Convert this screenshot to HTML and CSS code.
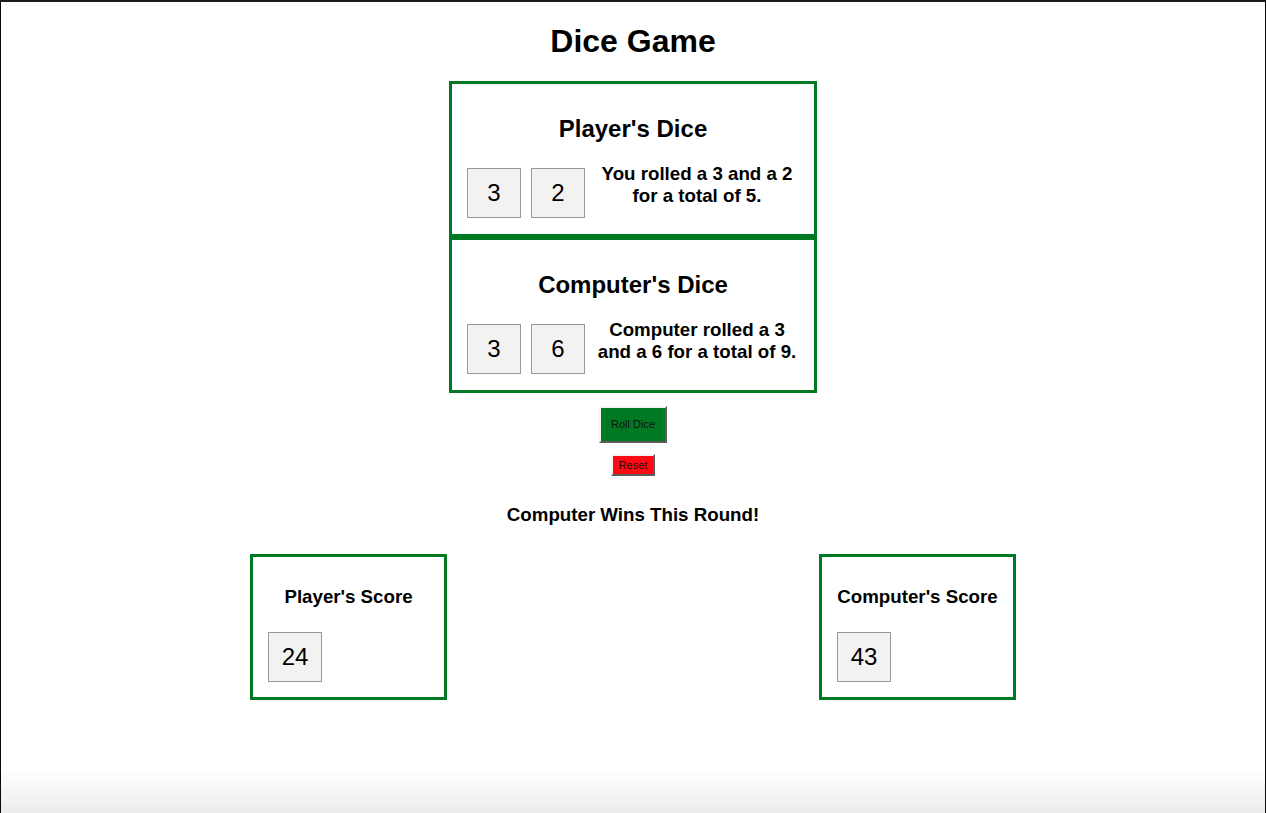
FILE: index.html
```html
<!DOCTYPE html>
<html lang="en">
<head>
<meta charset="utf-8">
<title>Dice Game</title>
<link rel="stylesheet" href="styles.css">
</head>
<body>
<div class="window">
  <h1 class="title">Dice Game</h1>

  <div class="dice-panels">
    <section class="dice-box">
      <h2 class="dice-heading">Player's Dice</h2>
      <div class="dice-row">
        <div class="die">3</div>
        <div class="die">2</div>
        <p class="roll-text">You rolled a 3 and a 2 for a total of 5.</p>
      </div>
    </section>
    <section class="dice-box">
      <h2 class="dice-heading">Computer's Dice</h2>
      <div class="dice-row">
        <div class="die">3</div>
        <div class="die">6</div>
        <p class="roll-text">Computer rolled a 3 and a 6 for a total of 9.</p>
      </div>
    </section>
  </div>

  <div class="controls">
    <button class="btn btn-roll" type="button">Roll Dice</button>
    <button class="btn btn-reset" type="button">Reset</button>
  </div>

  <p class="result">Computer Wins This Round!</p>

  <div class="scores">
    <section class="score-box">
      <h3 class="score-heading">Player's Score</h3>
      <div class="die">24</div>
    </section>
    <section class="score-box">
      <h3 class="score-heading">Computer's Score</h3>
      <div class="die">43</div>
    </section>
  </div>
</div>
</body>
</html>
```

FILE: styles.css
```css
html, body {
  margin: 0;
  padding: 0;
}

body {
  font-family: "Liberation Sans", Arial, sans-serif;
  color: #000;
  background: #fff;
}

.window {
  box-sizing: border-box;
  height: 813px;
  border-top: 2px solid #1c1c1c;
  border-left: 1px solid #0a0a0a;
  border-right: 1px solid #0a0a0a;
  background: linear-gradient(to bottom, #ffffff calc(100% - 44px), #ececec 100%);
  display: flex;
  flex-direction: column;
  align-items: center;
  overflow: hidden;
}

.title {
  font-size: 32px;
  font-weight: bold;
  margin: 21px 0 21px;
  line-height: normal;
}

.dice-panels {
  display: flex;
  flex-direction: column;
  width: 368px;
}

.dice-box {
  box-sizing: border-box;
  height: 156px;
  border: 3px solid #007a22;
  padding: 31px 15px 0;
}

.dice-heading {
  margin: 0 0 15px;
  font-size: 24px;
  font-weight: bold;
  text-align: center;
  line-height: normal;
}

.dice-row {
  display: flex;
  align-items: flex-start;
  gap: 10px;
}

.dice-row .die {
  margin-top: 10px;
}

.die {
  box-sizing: border-box;
  width: 54px;
  height: 50px;
  flex: none;
  border: 1px solid #999;
  background: #f2f2f2;
  display: flex;
  align-items: center;
  justify-content: center;
  font-size: 24px;
}

.roll-text {
  flex: 1;
  margin: 5px 0 0;
  font-size: 18.72px;
  font-weight: bold;
  text-align: center;
  line-height: normal;
}

.controls {
  margin-top: 13px;
  display: flex;
  flex-direction: column;
  align-items: center;
  gap: 11px;
}

.btn {
  font-family: "Liberation Sans", Arial, sans-serif;
  font-size: 11px;
  color: #111;
  border-style: solid;
  border-width: 2px;
  border-color: #f4f4f4 #5c5c5c #5c5c5c #f4f4f4;
  border-radius: 0;
  margin: 0;
  cursor: pointer;
}

.btn-roll {
  background: #007a22;
  padding: 10px;
  line-height: 13px;
}

.btn-reset {
  background: #ff0a14;
  padding: 3px 6px;
  line-height: 12px;
}

.result {
  margin: 28px 0;
  font-size: 18.72px;
  font-weight: bold;
  line-height: normal;
}

.scores {
  display: flex;
  justify-content: center;
  gap: 372px;
}

.score-box {
  box-sizing: border-box;
  width: 197px;
  height: 146px;
  border: 3px solid #007a22;
  padding: 29px 15px 15px;
}

.score-heading {
  margin: 0 -6px 24px;
  font-size: 18.72px;
  font-weight: bold;
  text-align: center;
  white-space: nowrap;
  line-height: normal;
}
```
